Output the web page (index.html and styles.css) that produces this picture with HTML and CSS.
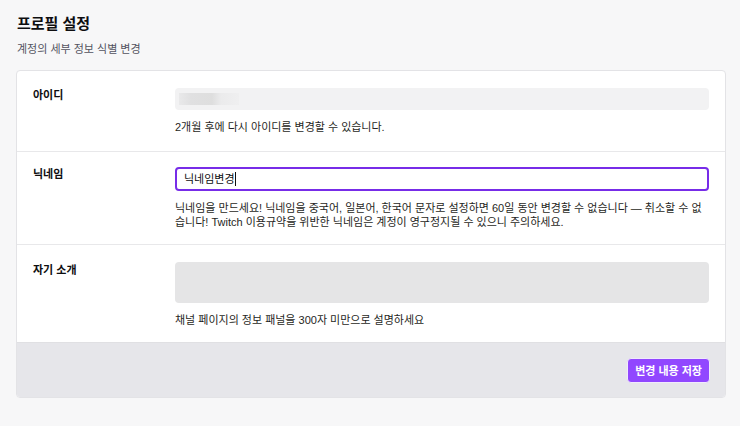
FILE: index.html
```html
<!DOCTYPE html>
<html lang="ko">
<head>
<meta charset="utf-8">
<link rel="stylesheet" href="styles.css">
</head>
<body>
<div class="page">
  <h1 class="title">프로필 설정</h1>
  <p class="subtitle">계정의 세부 정보 식별 변경</p>
  <div class="card">
    <div class="row row-id">
      <div class="label">아이디</div>
      <div class="field">
        <div class="input input-disabled"><span class="blur"></span></div>
        <p class="help">2개월 후에 다시 아이디를 변경할 수 있습니다.</p>
      </div>
    </div>
    <div class="row row-nick">
      <div class="label">닉네임</div>
      <div class="field">
        <div class="input input-focus"><span class="value">닉네임변경</span><span class="caret"></span></div>
        <p class="help">닉네임을 만드세요! 닉네임을 중국어, 일본어, 한국어 문자로 설정하면 60일 동안 변경할 수 없습니다 — 취소할 수 없습니다! Twitch 이용규약을 위반한 닉네임은 계정이 영구정지될 수 있으니 주의하세요.</p>
      </div>
    </div>
    <div class="row row-bio">
      <div class="label">자기 소개</div>
      <div class="field">
        <div class="textarea"></div>
        <p class="help">채널 페이지의 정보 패널을 300자 미만으로 설명하세요</p>
      </div>
    </div>
    <div class="footer">
      <button class="btn">변경 내용 저장</button>
    </div>
  </div>
</div>
</body>
</html>
```
FILE: styles.css
```css
html, body {
  margin: 0;
  padding: 0;
  background: #f7f7f8;
  font-family: "Liberation Sans", "Noto Sans CJK KR", sans-serif;
  color: #0e0e10;
}
.page {
  padding: 14px 14px 0 16px;
}
.title {
  margin: 0 0 0 1px;
  font-size: 15px;
  line-height: 20px;
  font-weight: 700;
}
.subtitle {
  margin: 8px 0 0 1px;
  font-size: 11px;
  line-height: 14px;
  color: #53535f;
}
.card {
  margin-top: 14px;
  width: 708px;
  background: #fff;
  border: 1px solid #e3e3e6;
  border-radius: 4px;
  overflow: hidden;
}
.row {
  display: flex;
  padding: 17px 16px 17px 16px;
  border-bottom: 1px solid #e8e8ea;
}
.row-nick {
  padding-top: 15px;
  padding-bottom: 15px;
}
.row-bio {
  padding-top: 17px;
  padding-bottom: 15px;
  border-bottom: none;
}
.label {
  width: 142px;
  flex: none;
  font-size: 11px;
  font-weight: 700;
  line-height: 14px;
}
.row-nick .label {
  padding-top: 0;
}
.row-bio .label {
  padding-top: 1px;
}
.field {
  flex: 1;
}
.input {
  box-sizing: border-box;
  height: 22px;
  border-radius: 4px;
  display: flex;
  align-items: center;
  font-size: 11px;
}
.input-disabled {
  background: #f2f2f3;
  padding-left: 4px;
}
.blur {
  width: 60px;
  height: 12px;
  background: linear-gradient(90deg, #e9e9ea 0, #e0e0e1 20%, #dedede 55%, #ebebec 70%, #efeff0 100%);
  filter: blur(0.6px);
}
.input-focus {
  height: 24px;
  border: 2px solid #772ce8;
  padding-left: 7px;
}
.value {
  line-height: 14px;
}
.caret {
  width: 1px;
  height: 14px;
  background: #0e0e10;
}
.textarea {
  height: 41px;
  border-radius: 4px;
  background: #e5e5e6;
}
.help {
  margin: 10px 0 0;
  font-size: 11px;
  line-height: 14px;
  color: #1f1f23;
}
.footer {
  background: #e6e6ea;
  border-top: 1px solid #e0e0e3;
  height: 54px;
  display: flex;
  align-items: center;
  justify-content: flex-end;
  padding-right: 15px;
}
.btn {
  font-family: inherit;
  font-size: 11px;
  font-weight: 700;
  color: #fff;
  background: #9147ff;
  border: 1px solid #f1eafd;
  border-radius: 4px;
  height: 25px;
  padding: 0 7px;
  cursor: pointer;
}
```
